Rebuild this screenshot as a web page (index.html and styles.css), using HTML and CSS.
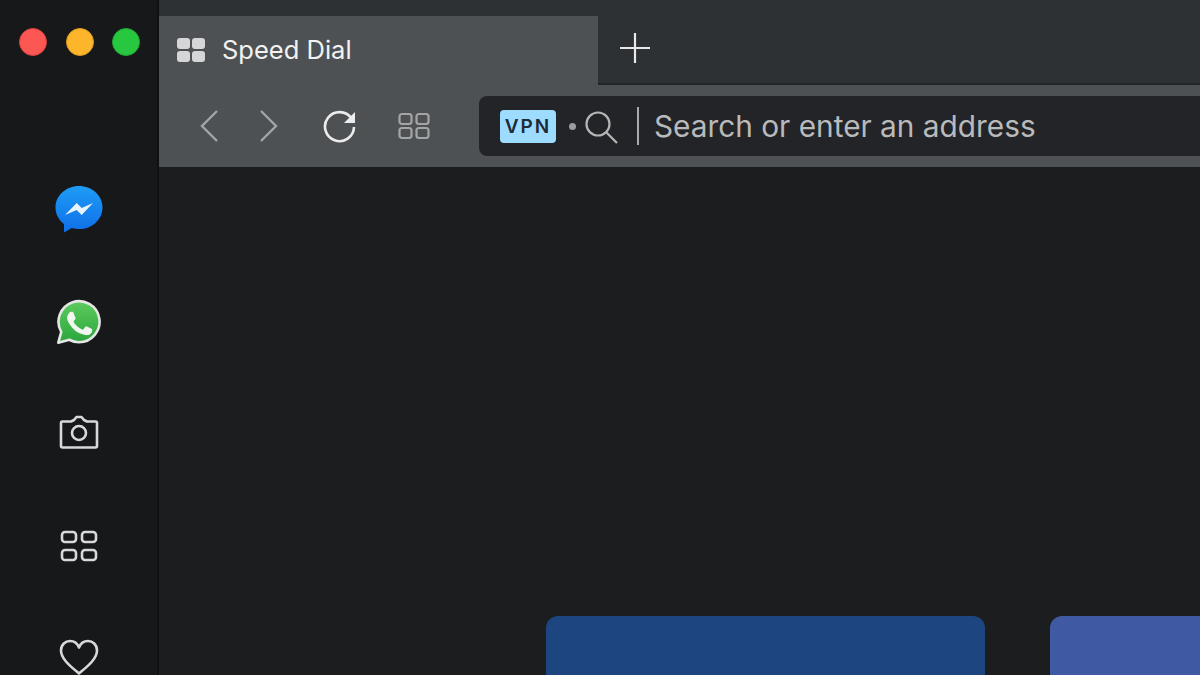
FILE: index.html
```html
<!DOCTYPE html>
<html lang="en">
  <head>
    <meta charset="UTF-8" />
    <meta name="viewport" content="width=device-width, initial-scale=1.0" />
    <title>Speed Dial</title>
    <link rel="stylesheet" href="styles.css">
  </head>
  <body>
    <div class="window">
      <!-- Sidebar -->
      <aside class="sidebar">
        <div class="lights">
          <span class="light red"></span>
          <span class="light yellow"></span>
          <span class="light green"></span>
        </div>
        <div class="side-icons">
          <svg class="side-icon" width="50" height="50" viewBox="0 0 50 50">
            <defs>
              <linearGradient id="msgr" x1="0" y1="0" x2="0" y2="1">
                <stop offset="0" stop-color="#1e9cf5" />
                <stop offset="1" stop-color="#0f6fe8" />
              </linearGradient>
            </defs>
            <path d="M25 2C12 2 1.500 11.600 1.500 23.500c0 6.700 3.300 12.600 8.500 16.500v8.500l7.800-4.400c2.200.6 4.700 1 7.200 1 13 0 23.500-9.600 23.500-21.600S38 2 25 2z" fill="url(#msgr)" />
            <path d="M11 31 22.700 19l5 5L39 19 27.700 31l-5-5z" fill="#e9f3fc" />
          </svg>
          <svg class="side-icon" width="46" height="46" viewBox="0 0 50 50">
            <defs>
              <linearGradient id="wa" x1="0" y1="0" x2="0" y2="1">
                <stop offset="0" stop-color="#5ecb5e" />
                <stop offset="1" stop-color="#2aa63c" />
              </linearGradient>
            </defs>
            <path d="M2.500 47.500l3.200-11.700A22.300 22.300 0 1 1 25.100 47a22.500 22.500 0 0 1-10.700-2.700z" fill="url(#wa)" stroke="#e6e6e6" stroke-width="2.800" stroke-linejoin="round" />
            <path d="M18.200 13.500c-.6-1.300-1.200-1.300-1.800-1.300h-1.500c-.5 0-1.400.2-2.100 1-.7.800-2.800 2.700-2.800 6.500s2.800 7.500 3.200 8c.4.500 5.400 8.700 13.400 11.800 6.600 2.600 8 2.100 9.400 2s4.600-1.900 5.200-3.700c.6-1.800.6-3.400.5-3.700-.2-.3-.7-.5-1.500-.9-.8-.4-4.600-2.300-5.300-2.500-.7-.3-1.200-.4-1.800.4-.5.800-2 2.500-2.500 3.100-.5.500-.9.600-1.700.2-.8-.4-3.300-1.200-6.300-3.900-2.300-2.100-3.900-4.600-4.300-5.400-.5-.8 0-1.200.3-1.600.4-.4.800-.9 1.200-1.400.4-.5.500-.8.800-1.300.3-.5.100-1-.1-1.400-.2-.4-1.700-4.200-2.400-5.900z" fill="#f2f7f2" transform="translate(3.500 3.500) scale(.86)" />
          </svg>
          <svg class="side-icon" width="40" height="34" viewBox="0 0 40 34" fill="none" stroke="#d8d8d8" stroke-width="2.600" stroke-linejoin="round">
            <path d="M3.500 6.500h8.500l3-1.500 2.500-3h5l2.500 3 3 1.500h8.500a1.500 1.500 0 0 1 1.500 1.500v23a1.500 1.500 0 0 1-1.500 1.500H3.500A1.500 1.500 0 0 1 2 31V8a1.500 1.500 0 0 1 1.500-1.500z" />
            <circle cx="20" cy="18" r="7" />
          </svg>
          <svg class="side-icon" width="38" height="34" viewBox="0 0 38 34" fill="none" stroke="#d8d8d8" stroke-width="2.600">
            <rect x="2" y="3" width="14" height="10" rx="3" />
            <rect x="22" y="3" width="14" height="10" rx="3" />
            <rect x="2" y="21" width="14" height="10" rx="3" />
            <rect x="22" y="21" width="14" height="10" rx="3" />
          </svg>
          <svg class="side-icon" width="40" height="36" viewBox="0 0 40 36" fill="none" stroke="#d8d8d8" stroke-width="2.600" stroke-linejoin="round">
            <path d="M20 34.500C13 28.500 2 20.500 2 11.500 2 5.500 6.500 2 11 2c4 0 7.500 2.500 9 6.500C21.500 4.500 25 2 29 2c4.500 0 9 3.500 9 9.500 0 9-11 17-18 23z" />
          </svg>
        </div>
      </aside>

      <div class="main">
        <!-- Tab strip -->
        <div class="tabstrip">
          <div class="tab">
            <svg width="30" height="26" viewBox="0 0 30 26" fill="#d6d6d8">
              <rect x="1" y="1" width="13" height="11" rx="3" />
              <rect x="16" y="1" width="13" height="11" rx="3" />
              <rect x="1" y="14" width="13" height="11" rx="3" />
              <rect x="16" y="14" width="13" height="11" rx="3" />
            </svg>
            <span class="tab-title">Speed Dial</span>
          </div>
          <svg class="new-tab" width="32" height="32" viewBox="0 0 32 32" stroke="#e8e8e8" stroke-width="2.200">
            <path d="M16 1v30M1 16h30" />
          </svg>
        </div>

        <!-- Toolbar -->
        <div class="toolbar">
          <div class="nav">
            <svg width="20" height="34" viewBox="0 0 20 34" fill="none" stroke="#a3a5a6" stroke-width="2.400">
              <path d="M18 2 3 17l15 15" />
            </svg>
            <svg class="nav-forward" width="20" height="34" viewBox="0 0 20 34" fill="none" stroke="#a3a5a6" stroke-width="2.400">
              <path d="M2 2l15 15L2 32" />
            </svg>
            <svg class="nav-reload" width="34" height="34" viewBox="0 0 34 34" fill="none" stroke="#ececec" stroke-width="2.600">
              <path d="M28.500 9.500A14.500 14.500 0 1 0 31 18" />
              <path d="M32 3v11H21z" fill="#ececec" stroke="none" />
            </svg>
            <svg class="nav-tiles" width="32" height="28" viewBox="0 0 32 28" fill="none" stroke="#a3a5a6" stroke-width="2.200">
              <rect x="1.500" y="2" width="12" height="10" rx="2.500" />
              <rect x="18.500" y="2" width="12" height="10" rx="2.500" />
              <rect x="1.500" y="16" width="12" height="10" rx="2.500" />
              <rect x="18.500" y="16" width="12" height="10" rx="2.500" />
            </svg>
          </div>
          <div class="address">
            <span class="vpn">VPN</span>
            <span class="dot"></span>
            <svg class="search" width="34" height="34" viewBox="0 0 34 34" fill="none" stroke="#b5b5b5" stroke-width="2.200">
              <circle cx="14" cy="14" r="11.500" />
              <path d="M22.500 22.500 33 33" />
            </svg>
            <span class="divider"></span>
            <span class="placeholder">Search or enter an address</span>
          </div>
        </div>

        <!-- Speed dial tiles -->
        <div class="content">
          <div class="tile tile-one"></div>
          <div class="tile tile-two"></div>
        </div>
      </div>
    </div>
  </body>
</html>
```

FILE: styles.css
```css
/* General body styling */
html,
body {
  height: 100%;
}

body {
  margin: 0;
  overflow: hidden;
  background-color: #1c1d1f;
  font-family: Inter, "Liberation Sans", Arial, sans-serif;
}

.window {
  display: flex;
  width: 1200px;
  height: 675px;
  overflow: hidden;
}

/* Sidebar */
.sidebar {
  flex: none;
  width: 157px;
  background-color: #17181a;
  border-right: 2px solid #101113;
}

.lights {
  display: flex;
  gap: 18.500px;
  padding: 28px 0 0 19px;
}

.light {
  width: 28px;
  height: 28px;
  box-sizing: border-box;
  border-radius: 50%;
}

.red {
  background-color: #fc5753;
  border: 1px solid #d8433f;
}

.yellow {
  background-color: #fdb62c;
  border: 1px solid #d99a22;
}

.green {
  background-color: #27c73f;
  border: 1px solid #1fa733;
}

.side-icons {
  display: flex;
  flex-direction: column;
  align-items: center;
  padding-top: 128px;
}

.side-icon {
  flex: none;
}

.side-icon:nth-child(1) {
  margin-bottom: 65px;
}

.side-icon:nth-child(2) {
  margin-bottom: 70px;
}

.side-icon:nth-child(3) {
  margin-bottom: 80px;
}

.side-icon:nth-child(4) {
  margin-bottom: 76px;
}

/* Tab strip */
.main {
  flex: 1;
  min-width: 0;
  display: flex;
  flex-direction: column;
}

.tabstrip {
  flex: none;
  height: 85px;
  display: flex;
  align-items: flex-end;
  background-color: #2e3134;
  box-shadow: inset 0 -2px 0 #232528;
}

.tab {
  width: 439px;
  height: 69px;
  box-sizing: border-box;
  display: flex;
  align-items: center;
  gap: 16px;
  padding: 0 0 2px 17px;
  background-color: #4e5153;
}

.tab-title {
  color: #f2f2f2;
  font-size: 25.500px;
  line-height: 1;
}

.new-tab {
  flex: none;
  margin: 0 0 21px 21px;
}

/* Toolbar */
.toolbar {
  flex: none;
  height: 82px;
  box-sizing: border-box;
  display: flex;
  align-items: flex-start;
  padding-top: 11px;
  background-color: #4e5153;
}

.nav {
  flex: none;
  width: 320px;
  height: 60px;
  box-sizing: border-box;
  display: flex;
  align-items: center;
  padding-left: 40px;
}

.nav-forward {
  margin-left: 40px;
}

.nav-reload {
  margin-left: 44px;
}

.nav-tiles {
  margin-left: 41px;
}

.address {
  flex: 1;
  height: 60px;
  box-sizing: border-box;
  display: flex;
  align-items: center;
  padding-left: 21px;
  background-color: #222427;
  border-radius: 8px 0 0 8px;
}

.vpn {
  width: 56px;
  height: 33px;
  display: flex;
  align-items: center;
  justify-content: center;
  background-color: #9ddcff;
  border-radius: 4px;
  color: #1c2b36;
  font-size: 19px;
  font-weight: 600;
  letter-spacing: 2px;
}

.dot {
  width: 7px;
  height: 7px;
  margin: 0 8px 0 13px;
  border-radius: 50%;
  background-color: #9a9c9d;
}

.search {
  flex: none;
  position: relative;
  top: 1px;
}

.divider {
  width: 2px;
  height: 38px;
  margin: 0 15px 0 19px;
  background-color: #a8a9aa;
}

.placeholder {
  color: #b9babb;
  font-size: 29.800px;
  white-space: nowrap;
}

/* Speed dial tiles */
.content {
  flex: 1;
  display: flex;
  gap: 65px;
  padding: 449px 0 0 387px;
  overflow: hidden;
}

.tile {
  flex: none;
  width: 439px;
  height: 200px;
  border-radius: 12px 12px 0 0;
}

.tile-one {
  background-color: #1d4680;
}

.tile-two {
  background-color: #4059a3;
}
```
